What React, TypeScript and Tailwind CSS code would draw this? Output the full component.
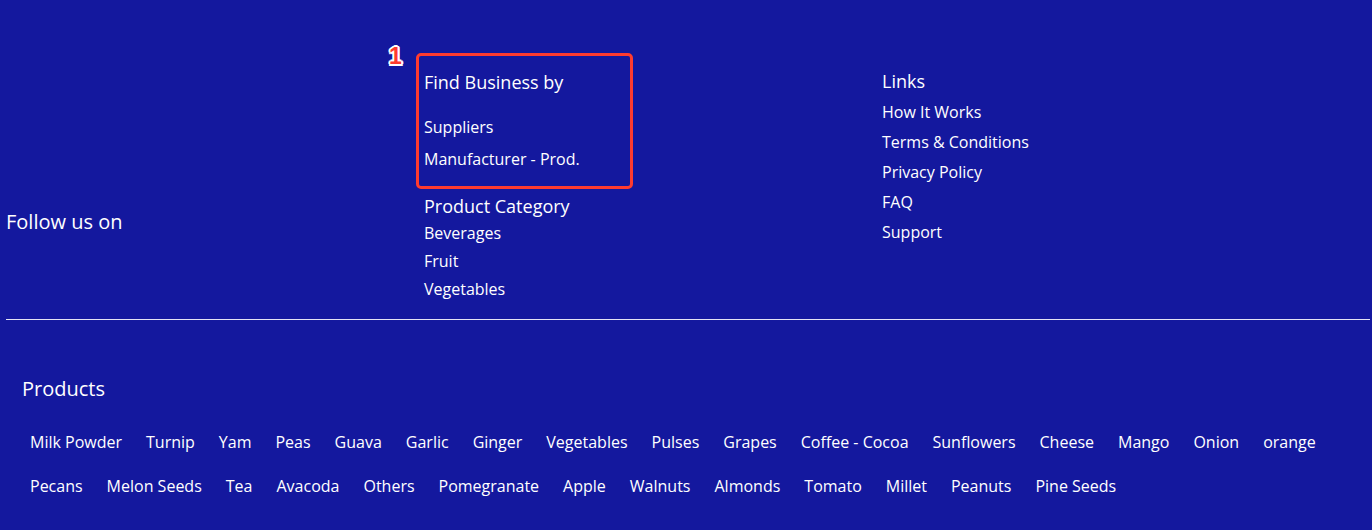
const findBusiness = ["Suppliers", "Manufacturer - Prod."];
const categories = ["Beverages", "Fruit", "Vegetables"];
const links = ["How It Works", "Terms & Conditions", "Privacy Policy", "FAQ", "Support"];

const productRows = [
	[
		"Milk Powder",
		"Turnip",
		"Yam",
		"Peas",
		"Guava",
		"Garlic",
		"Ginger",
		"Vegetables",
		"Pulses",
		"Grapes",
		"Coffee - Cocoa",
		"Sunflowers",
		"Cheese",
		"Mango",
		"Onion",
		"orange",
	],
	[
		"Pecans",
		"Melon Seeds",
		"Tea",
		"Avacoda",
		"Others",
		"Pomegranate",
		"Apple",
		"Walnuts",
		"Almonds",
		"Tomato",
		"Millet",
		"Peanuts",
		"Pine Seeds",
	],
];

export default function App() {
	return (
		<footer
			className="w-[1372px] h-[530px] bg-[#14189e] text-white overflow-hidden"
			style={{ fontFamily: '"Open Sans", "Liberation Sans", sans-serif' }}
		>
			<div className="flex">
				{/* social */}
				<div className="w-[416px] pl-[6px] pt-[208px]">
					<div className="text-[20px] leading-[28px]">Follow us on</div>
				</div>

				{/* find business + categories */}
				<div className="w-[466px] pt-[53px]">
					<div className="relative w-[217px] h-[136px] border-[3px] border-[#ff3b2f] rounded-[5px] pl-[5px] pt-[14px]">
						<span
							className="absolute left-[-30px] top-[-11px] text-[23px] font-black text-[#ff3b2f] leading-none"
							style={{
								fontFamily: '"Liberation Sans", sans-serif',
								textShadow:
									"2px 0 0 #fff, -2px 0 0 #fff, 0 2px 0 #fff, 0 -2px 0 #fff, 1.5px 1.5px 0 #fff, -1.5px -1.5px 0 #fff, 1.5px -1.5px 0 #fff, -1.5px 1.5px 0 #fff",
							}}
						>
							1
						</span>
						<div className="text-[18px] leading-[24px]">Find Business by</div>
						<ul className="mt-[17px]">
							{findBusiness.map((item) => (
								<li key={item} className="text-[16px] leading-[32px]">
									{item}
								</li>
							))}
						</ul>
					</div>
					<div className="pl-[8px] mt-[5px]">
						<div className="text-[18px] leading-[24px]">Product Category</div>
						<ul className="mt-[1px]">
							{categories.map((item) => (
								<li key={item} className="text-[16px] leading-[28px]">
									{item}
								</li>
							))}
						</ul>
					</div>
				</div>

				{/* links */}
				<div className="pt-[69px]">
					<div className="text-[18px] leading-[24px]">Links</div>
					<ul className="mt-[4px]">
						{links.map((item) => (
							<li key={item} className="text-[16px] leading-[30px]">
								{item}
							</li>
						))}
					</ul>
				</div>
			</div>

			<hr className="mt-[16px] ml-[6px] mr-[2px] border-0 h-px bg-[#e4e4f4]" />

			<div className="px-[22px] pt-[55px]">
				<div className="text-[20px] leading-[28px]">Products</div>
				<div className="mt-[27px] flex flex-col gap-[20px]">
					{productRows.map((row, i) => (
						<div key={i} className="flex gap-2">
							{row.map((p) => (
								<span key={p} className="px-2 text-[16px] leading-[24px] whitespace-nowrap">
									{p}
								</span>
							))}
						</div>
					))}
				</div>
			</div>
		</footer>
	);
}
